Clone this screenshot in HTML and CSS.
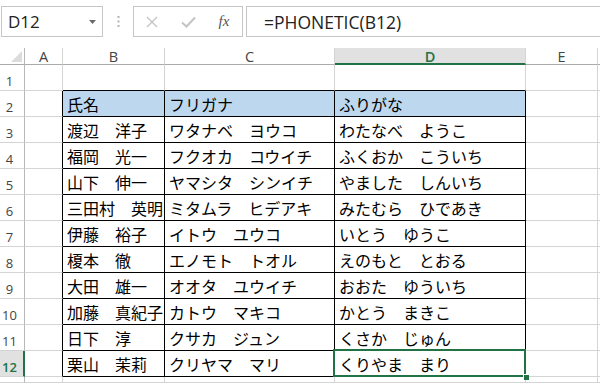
FILE: index.html
```html
<!DOCTYPE html>
<html lang="ja">
<head>
  <meta charset="UTF-8">
  <title>PHONETIC</title>
  <link rel="stylesheet" href="styles.css">
</head>
<body>

<div class="formula-bar">
  <div class="name-box">
    <span>D12</span>
    <svg width="7" height="4" viewBox="0 0 7 4"><polygon points="0,0 7,0 3.5,4" fill="#6a6a6a"/></svg>
  </div>
  <div class="grip">
    <svg width="3" height="11" viewBox="0 0 3 11">
      <rect x="0.5" y="0" width="2" height="2" fill="#b4b4b4"/>
      <rect x="0.5" y="4.5" width="2" height="2" fill="#b4b4b4"/>
      <rect x="0.5" y="9" width="2" height="2" fill="#b4b4b4"/>
    </svg>
  </div>
  <div class="fx-buttons">
    <span class="btn">
      <svg width="12" height="12" viewBox="0 0 12 12"><path d="M1 1 L11 11 M11 1 L1 11" stroke="#c4c4c4" stroke-width="1.4" fill="none"/></svg>
    </span>
    <span class="btn">
      <svg width="15" height="12" viewBox="0 0 15 12"><path d="M1 6.5 L5.5 10.5 L14 1.5" stroke="#c4c4c4" stroke-width="2" fill="none"/></svg>
    </span>
    <span class="btn fx">fx</span>
  </div>
  <div class="formula">=PHONETIC(B12)</div>
</div>

<div class="sheet">
  <!-- column headers -->
  <div class="corner">
    <svg width="11" height="11" viewBox="0 0 11 11"><polygon points="0,11 11,0 11,11" fill="#dcdcdc"/></svg>
  </div>
  <div class="col">A</div>
  <div class="col">B</div>
  <div class="col">C</div>
  <div class="col col-cur">D</div>
  <div class="col">E</div>
  <div class="col"></div>

  <!-- 1 -->
  <div class="rh">1</div>
  <div class="c"></div>
  <div class="c top"></div>
  <div class="c top"></div>
  <div class="c top"></div>
  <div class="c"></div>
  <div class="c"></div>

  <!-- 2 -->
  <div class="rh">2</div>
  <div class="c edge"></div>
  <div class="c tb head">氏名</div>
  <div class="c tb head">フリガナ</div>
  <div class="c tb head">ふりがな</div>
  <div class="c"></div>
  <div class="c"></div>

  <!-- 3 -->
  <div class="rh">3</div>
  <div class="c edge"></div>
  <div class="c tb">渡辺　洋子</div>
  <div class="c tb">ワタナベ　ヨウコ</div>
  <div class="c tb">わたなべ　ようこ</div>
  <div class="c"></div>
  <div class="c"></div>

  <!-- 4 -->
  <div class="rh">4</div>
  <div class="c edge"></div>
  <div class="c tb">福岡　光一</div>
  <div class="c tb">フクオカ　コウイチ</div>
  <div class="c tb">ふくおか　こういち</div>
  <div class="c"></div>
  <div class="c"></div>

  <!-- 5 -->
  <div class="rh">5</div>
  <div class="c edge"></div>
  <div class="c tb">山下　伸一</div>
  <div class="c tb">ヤマシタ　シンイチ</div>
  <div class="c tb">やました　しんいち</div>
  <div class="c"></div>
  <div class="c"></div>

  <!-- 6 -->
  <div class="rh">6</div>
  <div class="c edge"></div>
  <div class="c tb">三田村　英明</div>
  <div class="c tb">ミタムラ　ヒデアキ</div>
  <div class="c tb">みたむら　ひであき</div>
  <div class="c"></div>
  <div class="c"></div>

  <!-- 7 -->
  <div class="rh">7</div>
  <div class="c edge"></div>
  <div class="c tb">伊藤　裕子</div>
  <div class="c tb">イトウ　ユウコ</div>
  <div class="c tb">いとう　ゆうこ</div>
  <div class="c"></div>
  <div class="c"></div>

  <!-- 8 -->
  <div class="rh">8</div>
  <div class="c edge"></div>
  <div class="c tb">榎本　徹</div>
  <div class="c tb">エノモト　トオル</div>
  <div class="c tb">えのもと　とおる</div>
  <div class="c"></div>
  <div class="c"></div>

  <!-- 9 -->
  <div class="rh">9</div>
  <div class="c edge"></div>
  <div class="c tb">大田　雄一</div>
  <div class="c tb">オオタ　ユウイチ</div>
  <div class="c tb">おおた　ゆういち</div>
  <div class="c"></div>
  <div class="c"></div>

  <!-- 10 -->
  <div class="rh">10</div>
  <div class="c edge"></div>
  <div class="c tb">加藤　真紀子</div>
  <div class="c tb">カトウ　マキコ</div>
  <div class="c tb">かとう　まきこ</div>
  <div class="c"></div>
  <div class="c"></div>

  <!-- 11 -->
  <div class="rh">11</div>
  <div class="c edge"></div>
  <div class="c tb">日下　淳</div>
  <div class="c tb">クサカ　ジュン</div>
  <div class="c tb">くさか　じゅん</div>
  <div class="c"></div>
  <div class="c"></div>

  <!-- 12 -->
  <div class="rh rh-cur">12</div>
  <div class="c edge"></div>
  <div class="c tb">栗山　茉莉</div>
  <div class="c tb">クリヤマ　マリ</div>
  <div class="c tb sel">くりやま　まり</div>
  <div class="c"></div>
  <div class="c"></div>

  <!-- 13 -->
  <div class="rh"></div>
  <div class="c"></div>
  <div class="c"></div>
  <div class="c"></div>
  <div class="c"></div>
  <div class="c"></div>
  <div class="c"></div>
</div>

</body>
</html>
```

FILE: styles.css
```css
body {
  margin: 0;
  background: #fff;
  font-family: "Noto Sans CJK JP", sans-serif;
  color: #000;
  height: 383px;
  overflow: hidden;
}

/* formula bar */
.formula-bar {
  display: flex;
  height: 31px;
  margin-top: 6px;
  padding-left: 1px;
}
.name-box {
  width: 102px;
  box-sizing: border-box;
  border: 1px solid #c6c6c6;
  display: flex;
  align-items: center;
  justify-content: space-between;
  padding: 0 6px 0 6px;
  font: 17px "Open Sans", sans-serif;
  color: #222;
}
.grip {
  width: 30px;
  display: flex;
  align-items: center;
  justify-content: center;
}
.fx-buttons {
  width: 110px;
  box-sizing: border-box;
  border: 1px solid #c6c6c6;
  display: flex;
  align-items: center;
}
.btn {
  width: 36px;
  display: flex;
  justify-content: center;
}
.fx {
  font: italic 15px "Liberation Serif", serif;
  color: #555;
}
.formula {
  flex: 1;
  margin-left: 3px;
  border: 1px solid #c6c6c6;
  border-right: none;
  padding-left: 17px;
  display: flex;
  align-items: center;
  font: 17.5px "Open Sans", sans-serif;
  color: #222;
}

/* sheet */
.sheet {
  display: grid;
  grid-template-columns: 25px 38px 102px 170px 191px 72px 1fr;
  grid-template-rows: 17px repeat(12, 26px) 1fr;
  height: 335px;
  margin-top: 11px;
}
.corner, .col, .rh, .c {
  box-sizing: border-box;
  border-right: 1px solid #d4d4d4;
  border-bottom: 1px solid #d4d4d4;
}
.corner {
  border-right-color: #b8b8b8;
  border-bottom-color: #ababab;
  display: flex;
  align-items: flex-end;
  justify-content: flex-end;
  padding: 0 2px 2px 0;
}
.col {
  border-bottom-color: #ababab;
  display: flex;
  align-items: center;
  justify-content: center;
  font: 14.5px "Open Sans", sans-serif;
  color: #444;
}
.col-cur {
  background: #e1e1e1;
  border-bottom: 2px solid #217346;
  padding-top: 1px;
  color: #217346;
  font-weight: 600;
}
.rh {
  border-right-color: #b8b8b8;
  display: flex;
  align-items: flex-end;
  justify-content: center;
  padding: 0 5px 2px 0;
  font: 13px "Open Sans", sans-serif;
  line-height: 13px;
  color: #444;
}
.rh-cur {
  background: #e1e1e1;
  border-right: 2px solid #217346;
  padding-right: 4px;
  color: #217346;
  font-weight: 600;
}
.c {
  display: flex;
  align-items: center;
  padding-left: 4px;
  font-size: 16px;
  white-space: nowrap;
}
.edge {
  border-right-color: #000;
}
.top {
  border-bottom-color: #000;
}
.tb {
  border-right-color: #000;
  border-bottom-color: #000;
}
.head {
  background: #bdd7ee;
}
.sel {
  position: relative;
}
.sel::after {
  content: "";
  position: absolute;
  top: -2px;
  left: -2px;
  right: -1px;
  bottom: -1px;
  border: 2px solid #217346;
}
.sel::before {
  content: "";
  position: absolute;
  right: -4px;
  bottom: -4px;
  width: 5px;
  height: 5px;
  background: #217346;
  border-left: 1px solid #fff;
  border-top: 1px solid #fff;
  z-index: 2;
}
```
